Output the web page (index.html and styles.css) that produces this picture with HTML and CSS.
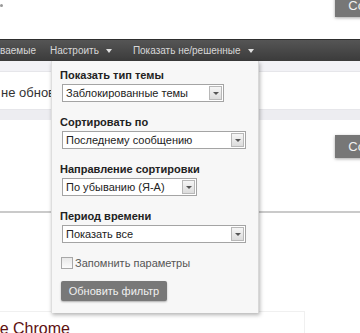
FILE: index.html
```html
<!DOCTYPE html>
<html lang="ru">
<head>
    <meta charset="UTF-8">
    <meta name="viewport" content="width=device-width, initial-scale=1.0">
    <title>Форум - темы</title>
    <link rel="stylesheet" href="styles.css">
</head>
<body>
    <div class="page">
        <div class="top">
            <span class="dot"></span>
            <a class="btn">Создать тему</a>
        </div>

        <div class="navbar">
            <div class="nav-cut"><span>Отслеживаемые</span></div>
            <span class="nav-item">Настроить <i class="caret"></i></span>
            <span class="nav-item">Показать не/решенные <i class="caret"></i></span>
        </div>

        <div class="strip"></div>
        <div class="notice">не обновлялись</div>
        <div class="strip strip-low"></div>

        <div class="actions">
            <a class="btn">Создать тему</a>
        </div>

        <div class="divider"></div>

        <div class="thread">
            <span class="thread-title">Google Chrome</span>
        </div>

        <!-- выпадающее меню "Настроить" -->
        <div class="filter-menu">
            <div class="field">
                <label>Показать тип темы</label>
                <div class="select w-1"><span>Заблокированные темы</span><i class="arrow"></i></div>
            </div>
            <div class="field">
                <label>Сортировать по</label>
                <div class="select w-2"><span>Последнему сообщению</span><i class="arrow"></i></div>
            </div>
            <div class="field">
                <label>Направление сортировки</label>
                <div class="select w-3"><span>По убыванию (Я-А)</span><i class="arrow"></i></div>
            </div>
            <div class="field">
                <label>Период времени</label>
                <div class="select w-2"><span>Показать все</span><i class="arrow"></i></div>
            </div>
            <div class="remember">
                <span class="checkbox"></span>
                <span>Запомнить параметры</span>
            </div>
            <button class="update">Обновить фильтр</button>
        </div>
    </div>
</body>
</html>
```

FILE: styles.css
```css
body {
    margin: 0;
    font-family: "Liberation Sans", Arial, sans-serif;
    background: #fff;
    color: #333;
}
.page {
    position: relative;
    width: 360px;
    height: 333px;
    overflow: hidden;
}
.top {
    height: 39px;
    display: flex;
    justify-content: space-between;
    align-items: flex-start;
}
.dot {
    width: 3px;
    height: 3px;
    margin-top: 4px;
    border-radius: 2px;
    background: #999;
}
.btn {
    display: block;
    height: 23px;
    line-height: 23px;
    padding: 0 10px 0 13px;
    background: #777;
    color: #f2f2f2;
    font-size: 13px;
    white-space: nowrap;
    box-shadow: 0 1px 3px rgba(0,0,0,0.35);
}
.top .btn {
    margin-top: -6px;
    margin-right: -80px;
}
.navbar {
    height: 21px;
    border-top: 1px solid #2e2e2e;
    background: linear-gradient(#555, #3b3b3b);
    display: flex;
    align-items: center;
    font-size: 10px;
    color: #d8d8d8;
}
.nav-cut {
    width: 36px;
    overflow: hidden;
    display: flex;
    justify-content: flex-end;
}
.nav-cut span {
    white-space: nowrap;
}
.nav-item {
    display: flex;
    align-items: center;
    margin-left: 14px;
    white-space: nowrap;
}
.nav-item + .nav-item {
    margin-left: 21px;
}
.caret {
    width: 0;
    height: 0;
    margin-left: 7px;
    border-left: 3px solid transparent;
    border-right: 3px solid transparent;
    border-top: 4px solid #e0e0e0;
}
.strip {
    height: 10px;
    background: #f2f2f6;
    border-bottom: 1px solid #e6e6ea;
}
.strip-low {
    background: #ededf1;
    border-bottom: none;
    border-top: 1px solid #e6e6ea;
}
.notice {
    width: 51px;
    height: 37px;
    padding-left: 1px;
    line-height: 41px;
    font-size: 13px;
    color: #333;
    white-space: nowrap;
    overflow: hidden;
}
.actions {
    display: flex;
    justify-content: flex-end;
    padding-top: 15px;
}
.actions .btn {
    margin-right: -80px;
}
.divider {
    margin-top: 53px;
    height: 2px;
    background: #cacaca;
}
.thread {
    margin-top: 98px;
    width: 305px;
    height: 40px;
    border-top: 1px solid #f0f0f0;
    border-right: 1px solid #f0f0f0;
    padding-top: 8px;
    box-sizing: border-box;
    overflow: hidden;
}
.thread-title {
    display: block;
    margin-left: -43px;
    font-size: 16px;
    line-height: 18px;
    color: #5e1010;
    white-space: nowrap;
}
.filter-menu {
    position: absolute;
    left: 51px;
    top: 61px;
    width: 208px;
    height: 252px;
    padding: 8px 0 0 8px;
    box-sizing: border-box;
    background: #f7f7f7;
    border-left: 1px solid #dedede;
    border-right: 1px solid #d8d8d8;
    box-shadow: 1px 2px 4px rgba(0,0,0,0.3);
}
.field {
    margin-bottom: 14px;
}
.field label {
    display: block;
    font-size: 11px;
    font-weight: bold;
    line-height: 13px;
    color: #222;
    margin-bottom: 2px;
}
.select {
    display: flex;
    align-items: center;
    height: 18px;
    margin-left: 2px;
    box-sizing: border-box;
    background: #fff;
    border: 1px solid #a4a4a4;
    font-size: 11px;
    color: #222;
}
.select span {
    flex: 1;
    padding-left: 3px;
    white-space: nowrap;
}
.w-1 { width: 162px; }
.w-2 { width: 184px; }
.w-3 { width: 135px; }
.arrow {
    width: 13px;
    height: 14px;
    margin-right: 1px;
    box-sizing: border-box;
    border: 1px solid #b8b8b8;
    background: linear-gradient(#f6f6f6, #dcdcdc);
    display: flex;
    align-items: center;
    justify-content: center;
}
.arrow::after {
    content: "";
    border-left: 3px solid transparent;
    border-right: 3px solid transparent;
    border-top: 3px solid #555;
}
.remember {
    display: flex;
    align-items: center;
    margin-top: 1px;
    font-size: 11px;
    color: #555;
}
.checkbox {
    width: 12px;
    height: 12px;
    margin: 0 2px 0 1px;
    box-sizing: border-box;
    border: 1px solid #a8a8a8;
    background: linear-gradient(#e8e8e8, #fbfbfb);
}
.update {
    display: block;
    margin: 12px 0 0 1px;
    width: 106px;
    height: 20px;
    padding: 0;
    border: none;
    border-radius: 2px;
    background: #787878;
    color: #f0f0f0;
    font-family: "Liberation Sans", Arial, sans-serif;
    font-size: 11px;
    box-shadow: 0 1px 2px rgba(0,0,0,0.3);
}
```
